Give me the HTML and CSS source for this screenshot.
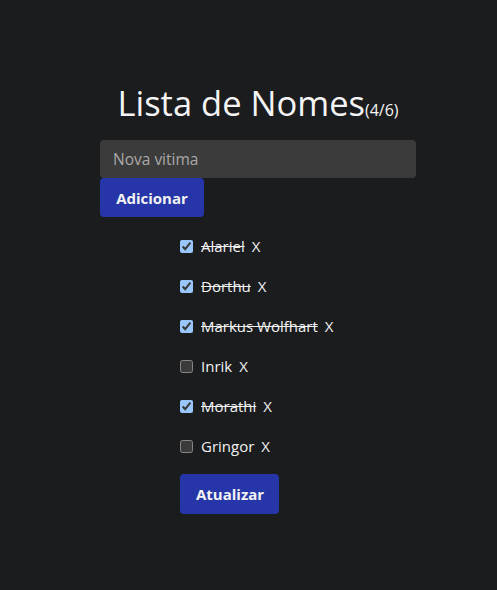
FILE: index.html
```html
<!DOCTYPE html>
<html lang="pt">
<head>
<meta charset="utf-8">
<link rel="stylesheet" href="styles.css">
</head>
<body>
<main class="app">
  <h1 class="title">Lista de Nomes<small class="count">(4/6)</small></h1>
  <input class="new-input" type="text" placeholder="Nova vitima">
  <button class="btn btn-add">Adicionar</button>
  <ul class="list">
    <li class="item done"><input type="checkbox" checked><span class="name">Alariel</span><span class="del">X</span></li>
    <li class="item done"><input type="checkbox" checked><span class="name">Dorthu</span><span class="del">X</span></li>
    <li class="item done"><input type="checkbox" checked><span class="name">Markus Wolfhart</span><span class="del">X</span></li>
    <li class="item"><input type="checkbox"><span class="name">Inrik</span><span class="del">X</span></li>
    <li class="item done"><input type="checkbox" checked><span class="name">Morathi</span><span class="del">X</span></li>
    <li class="item"><input type="checkbox"><span class="name">Gringor</span><span class="del">X</span></li>
  </ul>
  <button class="btn btn-update">Atualizar</button>
</main>
</body>
</html>
```

FILE: styles.css
```css
html { color-scheme: dark; }
body {
  margin: 0;
  background: #1b1c1e;
  color: #f2f2f2;
  font-family: "Open Sans", "Noto Sans", sans-serif;
}
.app {
  width: 316px;
  margin-left: 100px;
  padding-top: 75px;
  display: flex;
  flex-direction: column;
  align-items: flex-start;
}
.title {
  align-self: center;
  margin: 0 0 2px;
  font-weight: 400;
  font-size: 34.5px;
  line-height: 56px;
  color: #f4f4f4;
}
.count {
  font-size: 16px;
}
.new-input {
  box-sizing: border-box;
  width: 316px;
  height: 38px;
  margin: 0;
  padding: 0 13px;
  border: none;
  border-radius: 4px;
  background: #3b3b3b;
  color: #eee;
  font-family: inherit;
  font-size: 15.5px;
  outline: none;
}
.new-input::placeholder { color: #a9a9a9; }
.btn {
  border: none;
  border-radius: 4px;
  background: #2636a8;
  color: #f2f2f2;
  font-family: inherit;
  font-weight: 700;
  font-size: 15px;
  height: 39px;
  padding: 0 16px;
}
.btn-add { width: 104px; }
.list {
  list-style: none;
  margin: 9px 0 0;
  padding: 0 0 0 80px;
}
.item {
  height: 40px;
  display: flex;
  align-items: center;
  font-size: 15px;
}
.item input {
  width: 13px;
  height: 13px;
  margin: 0 8px 0 0;
}
.name { margin-right: 7px; }
.done .name { text-decoration: line-through; }
.btn-update {
  margin: 8px 0 0 80px;
  width: 99px;
  height: 40px;
}
```
